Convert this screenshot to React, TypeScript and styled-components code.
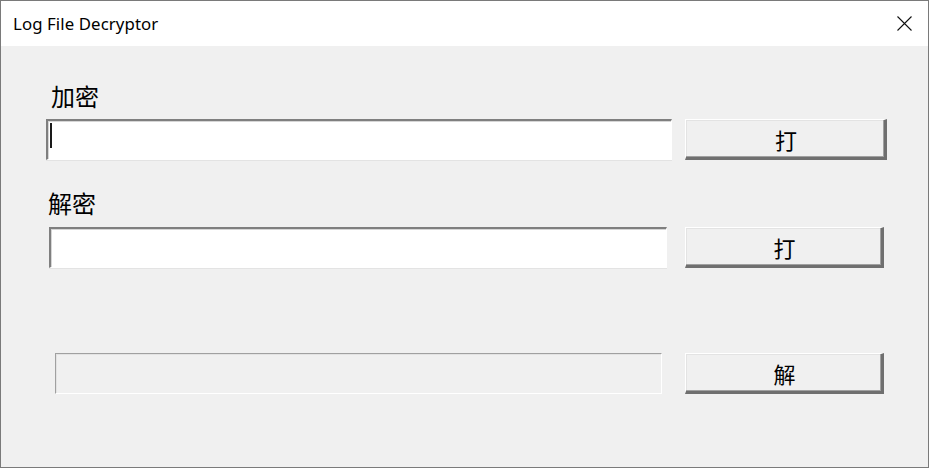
import React from "react";
import styled, { createGlobalStyle } from "styled-components";

const GlobalStyle = createGlobalStyle`
  html, body { margin: 0; padding: 0; background: #f0f0f0; }
  * { box-sizing: border-box; }
`;

const Window = styled.div`
  width: 929px;
  height: 468px;
  border: 1px solid #7a7a7a;
  display: flex;
  flex-direction: column;
  background: #f0f0f0;
  font-family: "Noto Sans CJK SC", "Noto Sans", sans-serif;
  color: #000;
`;

const TitleBar = styled.div`
  height: 45px;
  background: #ffffff;
  display: flex;
  align-items: center;
  justify-content: space-between;
  padding: 0 16px 0 12px;
  flex-shrink: 0;
`;

const Title = styled.span`
  font-family: "Noto Sans", "Segoe UI", sans-serif;
  font-size: 16.8px;
  letter-spacing: 0.1px;
  margin-top: 0px;
`;

const CloseIcon = styled.svg`
  width: 15px;
  height: 15px;
  margin-top: -1px;
`;

const Body = styled.div`
  flex: 1;
  display: flex;
  flex-direction: column;
  padding-top: 38px;
`;

const Label = styled.div<{ $left: number; $top?: number }>`
  font-size: 24px;
  line-height: 24px;
  height: 24px;
  margin-left: ${(p) => p.$left}px;
  margin-top: ${(p) => p.$top ?? 0}px;
  font-family: "Noto Sans CJK SC", sans-serif;
`;

const Row = styled.div<{ $top: number; $left: number }>`
  display: flex;
  align-items: flex-start;
  margin-top: ${(p) => p.$top}px;
  padding-left: ${(p) => p.$left}px;
`;

const Field = styled.div<{ $width: number }>`
  position: relative;
  width: ${(p) => p.$width}px;
  height: 41px;
  background: #ffffff;
  border-top: 2px solid #7f7f7f;
  border-left: 2px solid #7f7f7f;
  border-bottom: 1px solid #ffffff;
  border-right: 1px solid #ffffff;
  box-shadow: inset 1px 1px 0 #d6d6d6, 0 1px 0 #e3e3e3;
`;

const Caret = styled.span`
  position: absolute;
  left: 2px;
  top: 2px;
  width: 2px;
  height: 25px;
  background: #1a1a1a;
`;

const StaticBox = styled.div<{ $width: number }>`
  width: ${(p) => p.$width}px;
  height: 41px;
  background: #f0f0f0;
  border-top: 1px solid #a0a0a0;
  border-left: 1px solid #a0a0a0;
  border-bottom: 1px solid #ffffff;
  border-right: 1px solid #ffffff;
  box-shadow: inset 1px 1px 0 #e3e3e3;
`;

const Button = styled.button<{ $width: number; $gap: number }>`
  width: ${(p) => p.$width}px;
  height: 41px;
  margin-left: ${(p) => p.$gap}px;
  padding: 0;
  background: #f0f0f0;
  border-top: 1px solid #ffffff;
  border-left: 1px solid #ffffff;
  border-right: 3px solid #6f6f6f;
  border-bottom: 3px solid #6f6f6f;
  box-shadow: inset -1px -1px 0 #a0a0a0, inset 1px 1px 0 #e3e3e3;
  font-family: "Noto Sans CJK SC", sans-serif;
  font-size: 22px;
  line-height: 22px;
  color: #000;
  display: flex;
  align-items: center;
  justify-content: center;
  padding-top: 1px;
  padding-left: 2px;
`;

export default function App() {
  return (
    <>
      <GlobalStyle />
      <Window>
        <TitleBar>
          <Title>Log File Decryptor</Title>
          <CloseIcon viewBox="0 0 15 15">
            <path d="M0.5 0.5 L14.5 14.5 M14.5 0.5 L0.5 14.5" stroke="#111" strokeWidth="1.1" fill="none" />
          </CloseIcon>
        </TitleBar>
        <Body>
          <Label $left={50}>加密</Label>
          <Row $top={11} $left={45}>
            <Field $width={626}>
              <Caret />
            </Field>
            <Button $width={202} $gap={13}>打</Button>
          </Row>
          <Label $left={47} $top={31}>解密</Label>
          <Row $top={12} $left={48}>
            <Field $width={618} />
            <Button $width={199} $gap={18}>打</Button>
          </Row>
          <Row $top={85} $left={54}>
            <StaticBox $width={607} />
            <Button $width={199} $gap={23}>解</Button>
          </Row>
        </Body>
      </Window>
    </>
  );
}
